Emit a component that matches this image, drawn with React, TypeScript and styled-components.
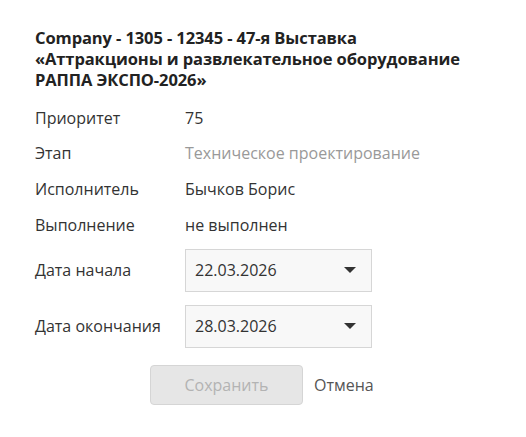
import React from 'react';
import styled, { createGlobalStyle } from 'styled-components';

const Global = createGlobalStyle`
  body {
    margin: 0;
    background: #fff;
    font-family: 'Open Sans', 'Noto Sans', sans-serif;
    color: #333;
  }
`;

const Dialog = styled.div`
  padding: 27px 20px 0 35px;
  width: 526px;
  box-sizing: border-box;
`;

const Title = styled.h1`
  margin: 0 0 10px;
  font-size: 16.5px;
  line-height: 21px;
  font-weight: 700;
  color: #222;
  letter-spacing: -0.1px;
`;

const Fields = styled.div`
  display: grid;
  grid-template-columns: 150px 1fr;
  align-items: center;
`;

const Label = styled.div`
  font-size: 16px;
  height: 35.6px;
  display: flex;
  align-items: center;
`;

const Value = styled.div<{ $muted?: boolean }>`
  font-size: 16px;
  height: 35.6px;
  display: flex;
  align-items: center;
  color: ${(p) => (p.$muted ? '#999' : '#333')};
`;

const DateLabel = styled(Label)`
  height: 56px;
`;

const DateCell = styled.div`
  height: 56px;
  display: flex;
  align-items: center;
`;

const DateBox = styled.div`
  width: 187px;
  height: 43px;
  box-sizing: border-box;
  border: 1px solid #d6d6d6;
  background: #f8f8f8;
  display: flex;
  align-items: center;
  justify-content: space-between;
  padding: 0 15px 0 9px;
  font-size: 16px;
  color: #333;
`;

const Caret = styled.span`
  width: 0;
  height: 0;
  border-left: 6px solid transparent;
  border-right: 6px solid transparent;
  border-top: 6px solid #333;
`;

const Actions = styled.div`
  display: flex;
  align-items: center;
  gap: 11px;
  margin: 11px 0 0 115px;
`;

const SaveButton = styled.button`
  width: 153px;
  height: 40px;
  box-sizing: border-box;
  border: 1px solid #d5d5d5;
  border-radius: 4px;
  background: #e6e6e6;
  color: #b3b3b3;
  font-family: inherit;
  font-size: 16px;
`;

const CancelLink = styled.span`
  font-size: 16px;
  color: #555;
`;

export default function App() {
  return (
    <>
      <Global />
      <Dialog>
        <Title>
          Company - 1305 - 12345 - 47-я Выставка
          <br />
          «Аттракционы и развлекательное оборудование
          <br />
          РАППА ЭКСПО-2026»
        </Title>
        <Fields>
          <Label>Приоритет</Label>
          <Value>75</Value>
          <Label>Этап</Label>
          <Value $muted>Техническое проектирование</Value>
          <Label>Исполнитель</Label>
          <Value>Бычков Борис</Value>
          <Label>Выполнение</Label>
          <Value>не выполнен</Value>
          <DateLabel>Дата начала</DateLabel>
          <DateCell>
            <DateBox>
              22.03.2026
              <Caret />
            </DateBox>
          </DateCell>
          <DateLabel>Дата окончания</DateLabel>
          <DateCell>
            <DateBox>
              28.03.2026
              <Caret />
            </DateBox>
          </DateCell>
        </Fields>
        <Actions>
          <SaveButton disabled>Сохранить</SaveButton>
          <CancelLink>Отмена</CancelLink>
        </Actions>
      </Dialog>
    </>
  );
}
